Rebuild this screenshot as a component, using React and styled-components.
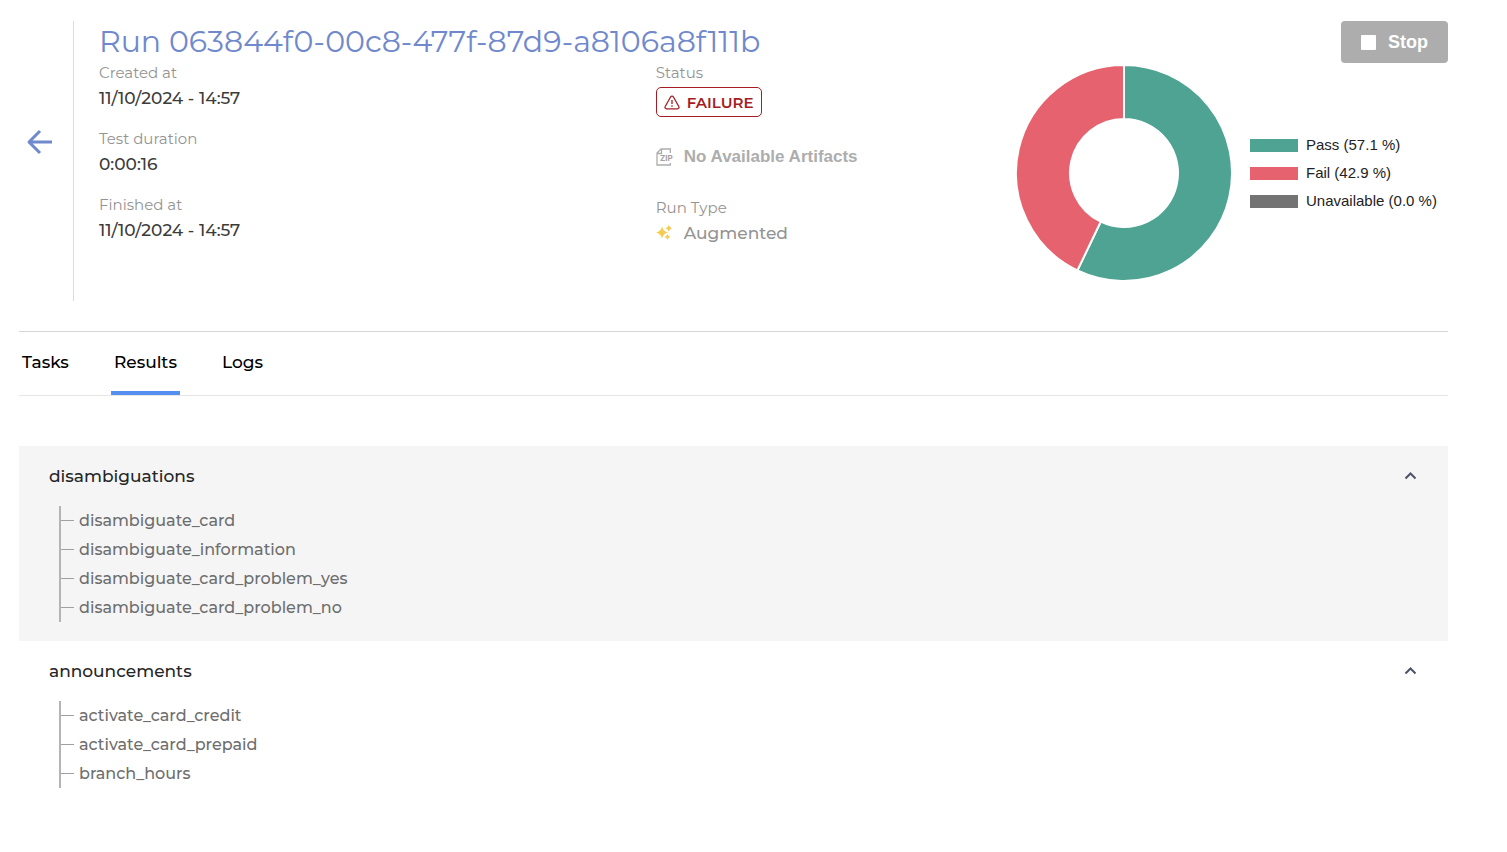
import React, { useState } from "react";
import styled, { createGlobalStyle } from "styled-components";

const GlobalStyle = createGlobalStyle`
  * {
    box-sizing: border-box;
  }

  body {
    margin: 0;
    background-color: white;
    font-family: "Montserrat", "Inter", sans-serif;
    color: #3c3c3c;
  }

  button {
    font-family: inherit;
    border: none;
    background: none;
    cursor: pointer;
  }
`;

const Page = styled.main`
  padding: 21px 59px 40px 19px;
`;

const Header = styled.header`
  display: flex;
  padding-bottom: 30px;
  border-bottom: 1px solid #d6d6d6;
`;

const BackLink = styled.a`
  display: flex;
  width: 55px;
  padding: 108px 0 0 7px;
  border-right: 1px solid #dcdcdc;
`;

const Details = styled.section`
  flex: 1;
  min-width: 0;
  padding-left: 25px;
`;

const Title = styled.h1`
  margin: 0;
  font-size: 30px;
  font-weight: 400;
  line-height: 41px;
  white-space: nowrap;
  color: #7088cc;
`;

const DetailColumns = styled.div`
  display: grid;
  grid-template-columns: 17fr 11fr;
`;

const DetailColumn = styled.dl`
  display: flex;
  flex-direction: column;
  gap: ${(props) => props.$gap};
  margin: 0;
`;

const Label = styled.dt`
  font-size: 15px;
  line-height: 22px;
  color: #939393;
`;

const Value = styled.dd`
  display: flex;
  align-items: center;
  gap: 11px;
  margin: 0;
  font-size: 17px;
  font-weight: 500;
  line-height: 29px;
  color: ${(props) => (props.$muted ? "#939393" : "#3c3c3c")};
`;

const StatusBadge = styled.span`
  display: inline-flex;
  align-items: center;
  gap: 7px;
  height: 30px;
  margin-top: 3px;
  padding: 0 7px;
  border: 1px solid #a61c22;
  border-radius: 5px;
  font-size: 15px;
  font-weight: 600;
  color: #a61c22;
`;

const ArtifactsButton = styled.button`
  display: flex;
  align-items: center;
  gap: 10px;
  padding: 0;
  font-family: Helvetica, "Liberation Sans", sans-serif;
  font-size: 17px;
  font-weight: 700;
  line-height: 24px;
  white-space: nowrap;
  color: #adadad;
`;

const Summary = styled.aside`
  display: flex;
  flex-direction: column;
  width: 432px;
  min-height: 280px;
`;

const StopButton = styled.button`
  display: flex;
  align-items: center;
  align-self: flex-end;
  gap: 12px;
  height: 42px;
  padding: 0 20px;
  border-radius: 4px;
  font-family: Helvetica, "Liberation Sans", sans-serif;
  font-size: 18px;
  font-weight: 700;
  color: white;
  background-color: #adadad;
`;

const StopSquare = styled.span`
  width: 15px;
  height: 15px;
  border-radius: 1px;
  background-color: white;
`;

const Chart = styled.div`
  display: flex;
  align-items: center;
  gap: 18px;
  margin-top: 2px;
`;

const Legend = styled.ul`
  display: flex;
  flex-direction: column;
  margin: 0;
  padding: 0;
  list-style: none;
`;

const LegendItem = styled.li`
  display: flex;
  align-items: center;
  gap: 8px;
  font-family: Helvetica, "Liberation Sans", sans-serif;
  font-size: 15px;
  line-height: 28px;
  white-space: nowrap;
  color: #222222;
`;

const LegendSwatch = styled.span`
  width: 48px;
  height: 13px;
  background-color: ${(props) => props.$color};
`;

const Tabs = styled.nav`
  display: flex;
  gap: 39px;
  height: 64px;
  margin-bottom: 50px;
  border-bottom: 1px solid #e6e6e6;
`;

const Tab = styled.button`
  padding: 0 3px;
  border-bottom: 4px solid
    ${(props) => (props.$active ? "#5590f0" : "transparent")};
  font-size: 17px;
  font-weight: 500;
  color: black;
`;

const ResultGroup = styled.section`
  padding: 0 30px 19px;
  background-color: ${(props) => (props.$shaded ? "#f5f5f5" : "white")};
`;

const GroupHeader = styled.button`
  display: flex;
  align-items: center;
  justify-content: space-between;
  width: 100%;
  height: 60px;
  padding: 0;
  font-size: 17px;
  font-weight: 500;
  color: #262626;
`;

const Tree = styled.ul`
  margin: 0 0 0 10px;
  padding: 0;
  border-left: 2px solid #b4b4b4;
  list-style: none;
`;

const TreeItem = styled.li`
  display: flex;
  align-items: center;
  gap: 5px;
  font-size: 16px;
  font-weight: 500;
  line-height: 29px;
  color: #6e6e6e;

  &::before {
    content: "";
    width: 13px;
    height: 1px;
    background-color: #a0a0a0;
  }
`;

const slices = [
  { name: "Pass", percent: 57.1, color: "#4fa393" },
  { name: "Fail", percent: 42.9, color: "#e5626e" },
  { name: "Unavailable", percent: 0, color: "#737373" },
];

const groups = [
  {
    name: "disambiguations",
    tests: [
      "disambiguate_card",
      "disambiguate_information",
      "disambiguate_card_problem_yes",
      "disambiguate_card_problem_no",
    ],
  },
  {
    name: "announcements",
    tests: ["activate_card_credit", "activate_card_prepaid", "branch_hours"],
  },
];

const BackArrow = () => (
  <svg width="27" height="26" viewBox="0 0 27 26" fill="none">
    <path
      d="M14 2L3 13l11 11M3 13h23"
      stroke="#7088cc"
      strokeWidth="3"
      strokeLinejoin="round"
    />
  </svg>
);

const WarningIcon = () => (
  <svg width="16" height="15" viewBox="0 0 16 15" fill="none">
    <path
      d="M6.700 1.800a1.500 1.500 0 0 1 2.600 0l5.500 9.700a1.500 1.500 0 0 1-1.300 2.300H2.500a1.500 1.500 0 0 1-1.300-2.300Z"
      stroke="#a61c22"
      strokeWidth="1.300"
    />
    <path
      d="M8 5v4M8 10.300v1.500"
      stroke="#a61c22"
      strokeWidth="1.300"
    />
  </svg>
);

const ZipIcon = () => (
  <svg width="18" height="18" viewBox="0 0 18 18" fill="none">
    <path
      d="M14.300 5V1H5L1 5v12h13.300v-2M5.500 1v4.500H1"
      stroke="#adadad"
      strokeWidth="1.300"
    />
    <text
      x="4"
      y="13"
      fill="#a3a3a3"
      fontFamily="Inter, sans-serif"
      fontSize="8"
      fontWeight="700"
    >
      ZIP
    </text>
  </svg>
);

const SparklesIcon = () => (
  <svg width="17" height="17" viewBox="0 0 17 17" fill="#f5cb51">
    <path d="M6 1.500Q7.200 6.300 12 7.500Q7.200 8.700 6 13.500Q4.800 8.700 0 7.500Q4.800 6.300 6 1.500Z" />
    <path d="M12.800 0Q13.600 2.400 16 3.200Q13.600 4 12.800 6.400Q12 4 9.600 3.200Q12 2.400 12.800 0Z" />
    <path d="M11.500 9Q12.200 11.200 14.400 11.900Q12.200 12.600 11.500 14.800Q10.800 12.600 8.600 11.900Q10.800 11.200 11.500 9Z" />
  </svg>
);

const Chevron = ({ open }) => (
  <svg width="15" height="10" viewBox="0 0 15 10" fill="none">
    <path
      d={open ? "M2.500 7.500l5-5 5 5" : "M2.500 2.500l5 5 5-5"}
      stroke="#4d5268"
      strokeWidth="2"
    />
  </svg>
);

const point = (radius, percent) => {
  const angle = (percent / 100) * 2 * Math.PI;
  return `${108 + radius * Math.sin(angle)} ${108 - radius * Math.cos(angle)}`;
};

const Doughnut = () => {
  let start = 0;

  const paths = slices
    .filter((slice) => slice.percent > 0)
    .map((slice) => {
      const end = start + slice.percent;
      const large = slice.percent > 50 ? 1 : 0;
      const d = `M${point(108, start)}A108 108 0 ${large} 1 ${point(108, end)}L${point(54, end)}A54 54 0 ${large} 0 ${point(54, start)}Z`;
      start = end;

      return (
        <path
          key={slice.name}
          d={d}
          fill={slice.color}
          stroke="white"
          strokeWidth="2"
        />
      );
    });

  return (
    <svg width="216" height="216" viewBox="0 0 216 216">
      {paths}
    </svg>
  );
};

const Group = ({ group, shaded }) => {
  const [open, setOpen] = useState(true);

  return (
    <ResultGroup $shaded={shaded}>
      <GroupHeader aria-expanded={open} onClick={() => setOpen(!open)}>
        {group.name}
        <Chevron open={open} />
      </GroupHeader>
      {open && (
        <Tree>
          {group.tests.map((test) => (
            <TreeItem key={test}>{test}</TreeItem>
          ))}
        </Tree>
      )}
    </ResultGroup>
  );
};

const App = () => {
  const [activeTab, setActiveTab] = useState("Results");

  return (
    <>
      <GlobalStyle />
      <Page>
        <Header>
          <BackLink href="#" aria-label="Back">
            <BackArrow />
          </BackLink>
          <Details>
            <Title>Run 063844f0-00c8-477f-87d9-a8106a8f111b</Title>
            <DetailColumns>
              <DetailColumn $gap="15px">
                <div>
                  <Label>Created at</Label>
                  <Value>11/10/2024 - 14:57</Value>
                </div>
                <div>
                  <Label>Test duration</Label>
                  <Value>0:00:16</Value>
                </div>
                <div>
                  <Label>Finished at</Label>
                  <Value>11/10/2024 - 14:57</Value>
                </div>
              </DetailColumn>
              <DetailColumn $gap="28px">
                <div>
                  <Label>Status</Label>
                  <Value>
                    <StatusBadge>
                      <WarningIcon />
                      FAILURE
                    </StatusBadge>
                  </Value>
                </div>
                <ArtifactsButton>
                  <ZipIcon />
                  No Available Artifacts
                </ArtifactsButton>
                <div>
                  <Label>Run Type</Label>
                  <Value $muted>
                    <SparklesIcon />
                    Augmented
                  </Value>
                </div>
              </DetailColumn>
            </DetailColumns>
          </Details>
          <Summary>
            <StopButton>
              <StopSquare />
              Stop
            </StopButton>
            <Chart>
              <Doughnut />
              <Legend>
                {slices.map((slice) => (
                  <LegendItem key={slice.name}>
                    <LegendSwatch $color={slice.color} />
                    {slice.name} ({slice.percent.toFixed(1)} %)
                  </LegendItem>
                ))}
              </Legend>
            </Chart>
          </Summary>
        </Header>
        <Tabs>
          {["Tasks", "Results", "Logs"].map((tab) => (
            <Tab
              key={tab}
              $active={tab === activeTab}
              onClick={() => setActiveTab(tab)}
            >
              {tab}
            </Tab>
          ))}
        </Tabs>
        {groups.map((group, index) => (
          <Group key={group.name} group={group} shaded={index % 2 === 0} />
        ))}
      </Page>
    </>
  );
};

export default App;
